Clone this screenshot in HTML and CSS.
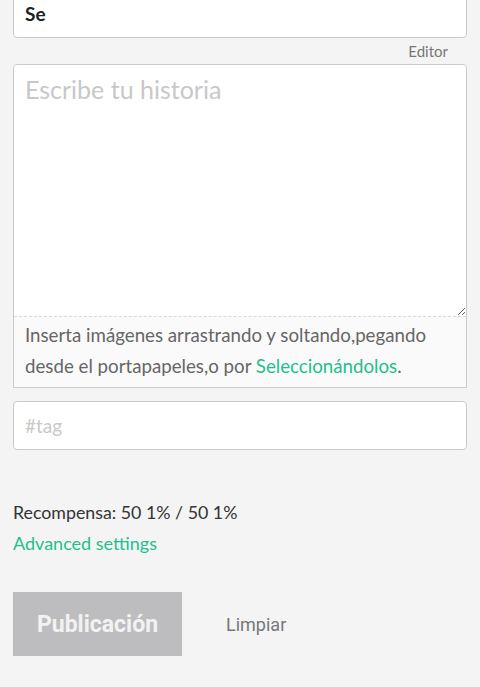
FILE: index.html
```html
<!DOCTYPE html>
<html lang="es">
<head>
    <meta charset="UTF-8">
    <meta name="viewport" content="width=device-width, initial-scale=1.0">
    <title>Nueva publicación</title>
    <link rel="stylesheet" href="styles.css">
</head>
<body>
    <div class="editor">
        <input type="text" class="title-input" value="Se">

        <div class="editor-toggle"><span>Editor</span></div>

        <div class="story">
            <textarea class="story-text" placeholder="Escribe tu historia"></textarea>
            <p class="dropzone">Inserta imágenes arrastrando y soltando,pegando desde el portapapeles,o por <a href="#">Seleccionándolos</a>.</p>
        </div>

        <input type="text" class="tag-input" placeholder="#tag">

        <div class="reward">Recompensa: 50 1% / 50 1%</div>
        <a href="#" class="advanced">Advanced settings</a>

        <div class="actions">
            <button class="btn-publish" disabled>Publicación</button>
            <button class="btn-clear">Limpiar</button>
        </div>
    </div>
</body>
</html>
```

FILE: styles.css
```css
body {
    margin: 0;
    background-color: #f4f4f4;
    font-family: Lato, "Open Sans", sans-serif;
    color: #333;
}
.editor {
    padding: 0 13px;
    margin-top: -11px;
}
input, textarea {
    box-sizing: border-box;
    width: 100%;
    font-family: inherit;
    background: #fff;
    border: 1px solid #cacaca;
    border-radius: 4px;
    outline: none;
}
input::placeholder, textarea::placeholder {
    color: #c8c8c8;
}
.title-input {
    display: block;
    height: 49px;
    padding: 0 11px;
    font-size: 19px;
    font-weight: bold;
    color: #222;
}
.editor-toggle {
    height: 26px;
    line-height: 26px;
    text-align: right;
    padding-right: 19px;
    font-size: 15px;
    color: #777;
}
.story {
    border: 1px solid #cacaca;
    border-radius: 4px 4px 0 0;
    background: #fafafa;
}
.story-text {
    display: block;
    height: 251px;
    border: 0;
    border-radius: 4px 4px 0 0;
    padding: 9px 11px;
    font-size: 25px;
    resize: vertical;
}
.dropzone {
    margin: 0;
    padding: 3px 11px 5px;
    border-top: 1px dashed #d8d8d8;
    font-size: 18.7px;
    line-height: 31px;
    color: #666;
}
a {
    color: #1fbf8f;
    text-decoration: none;
}
.tag-input {
    display: block;
    margin-top: 13px;
    height: 49px;
    padding: 0 11px;
    font-size: 19px;
}
.reward {
    margin-top: 47px;
    font-size: 17.8px;
    line-height: 31px;
}
.advanced {
    display: block;
    font-size: 18px;
    line-height: 31px;
}
.actions {
    display: flex;
    align-items: center;
    margin-top: 33px;
}
.actions button {
    font-family: Roboto, sans-serif;
    border: 0;
}
.btn-publish {
    width: 169px;
    height: 64px;
    background: #bdbdbf;
    color: #f2f2f2;
    font-size: 23px;
    font-weight: bold;
}
.btn-clear {
    margin-left: 44px;
    padding: 0;
    background: none;
    color: #777;
    font-size: 18px;
}
```
